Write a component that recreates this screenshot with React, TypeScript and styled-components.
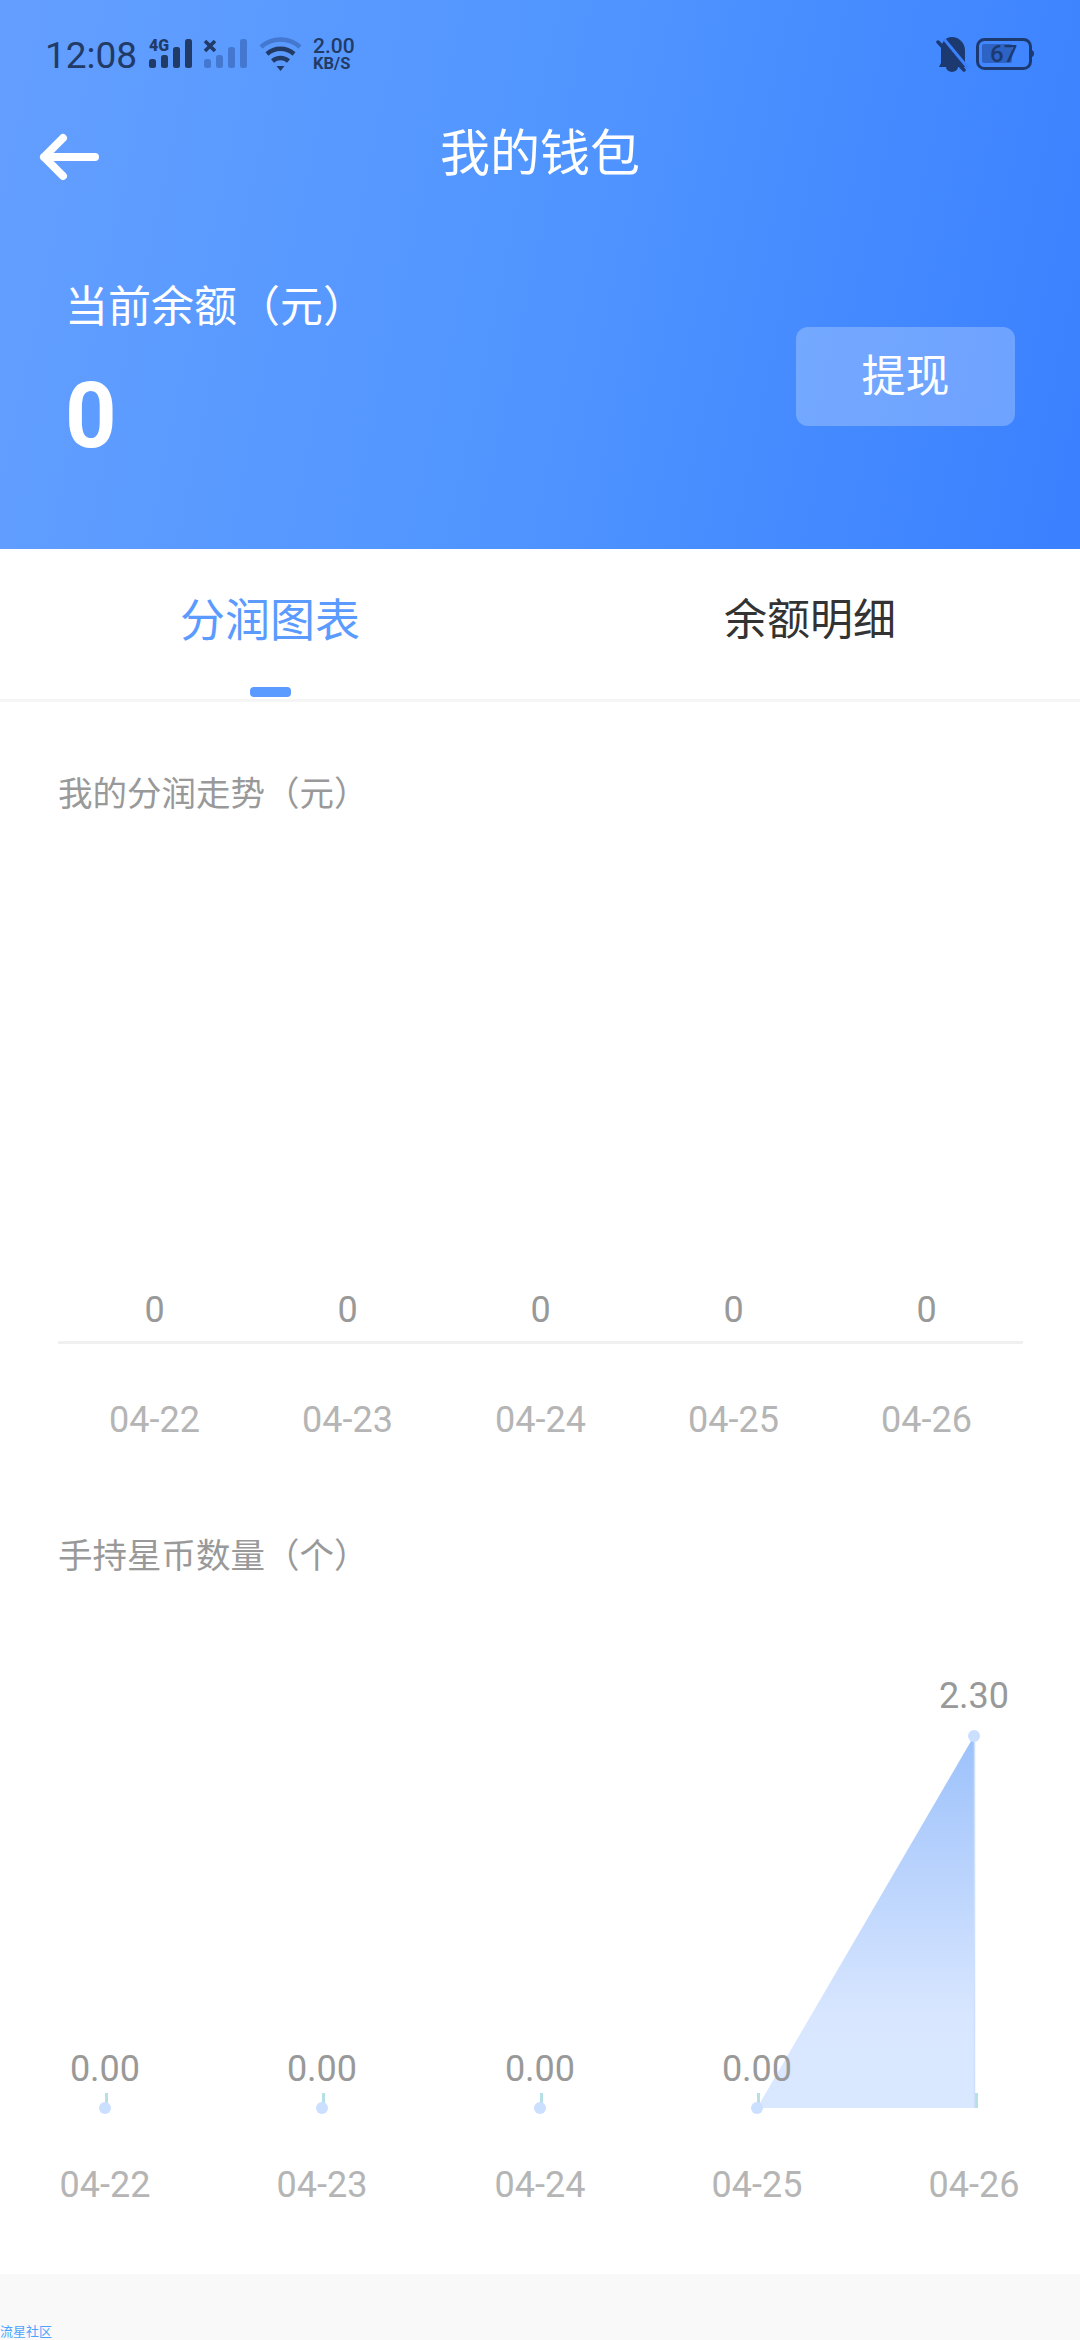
import React from "react";
import styled, { createGlobalStyle } from "styled-components";

const Global = createGlobalStyle`
  html, body { margin: 0; padding: 0; background: #fff; }
  body { font-family: Roboto, "Noto Sans CJK SC", sans-serif; }
  * { box-sizing: border-box; }
`;

const Page = styled.div`
  width: 1080px;
  height: 2340px;
  overflow: hidden;
  display: flex;
  flex-direction: column;
  background: #fff;
`;

const Header = styled.header`
  height: 549px;
  flex: none;
  background: linear-gradient(102deg, #649fff 0%, #5095ff 50%, #3a80ff 100%);
  display: flex;
  flex-direction: column;
`;

const StatusBar = styled.div`
  height: 110px;
  display: flex;
  align-items: center;
  padding: 0 44px 0 45px;
  color: #223a66;
`;

const Time = styled.span`
  font-size: 37px;
  width: 104px;
  flex: none;
`;

const StatusSpacer = styled.div`
  flex: 1;
`;

const TitleBar = styled.div`
  height: 84px;
  display: grid;
  grid-template-columns: 1fr auto 1fr;
  align-items: center;
  padding: 0;
`;

const BackButton = styled.div`
  padding: 8px 0 0 38px;
  display: flex;
`;

const Title = styled.h1`
  margin: 0;
  padding-top: 2px;
  color: #fff;
  font-size: 50px;
  font-weight: 400;
  line-height: 84px;
`;

const BalanceRow = styled.div`
  display: flex;
  justify-content: space-between;
  align-items: flex-start;
  padding: 88px 65px 0 65px;
`;

const BalanceInfo = styled.div`
  display: flex;
  flex-direction: column;
`;

const BalanceLabel = styled.div`
  color: #fff;
  font-size: 43px;
  line-height: 50px;
`;

const BalanceAmount = styled.div`
  margin-top: 40px;
  color: #fff;
  font-size: 90px;
  font-weight: 700;
  line-height: 90px;
`;

const WithdrawButton = styled.button`
  margin-top: 45px;
  width: 219px;
  height: 99px;
  border: 0;
  border-radius: 12px;
  background: rgba(255, 255, 255, 0.25);
  color: #fff;
  font-family: inherit;
  font-size: 44px;
  padding: 0 0 8px;
`;

const Tabs = styled.nav`
  height: 153px;
  flex: none;
  display: flex;
  border-bottom: 3px solid #f5f5f5;
`;

const Tab = styled.div<{ $active?: boolean }>`
  position: relative;
  flex: 1;
  text-align: center;
  line-height: ${(p) => (p.$active ? 145 : 142)}px;
  font-size: ${(p) => (p.$active ? 45 : 43)}px;
  color: ${(p) => (p.$active ? "#5b9bff" : "#333")};
`;

const TabMark = styled.span`
  position: absolute;
  left: 250px;
  bottom: 2px;
  width: 41px;
  height: 10px;
  border-radius: 4px;
  background: #5b9bff;
`;

const Main = styled.main`
  flex: 1;
  display: flex;
  flex-direction: column;
`;

const SectionTitle = styled.h2<{ $top: number }>`
  margin: ${(p) => p.$top}px 0 0;
  padding: 0 58px;
  color: #999;
  font-size: 34.5px;
  font-weight: 400;
  line-height: 48px;
`;

const BarChart = styled.section`
  margin: 470px 57px 0 58px;
  display: flex;
  flex-direction: column;
`;

const ChartRow = styled.div`
  display: grid;
  grid-template-columns: repeat(5, 1fr);
  text-align: center;
  font-size: 36px;
  line-height: 44px;
`;

const ValueCell = styled.span`
  color: #999;
`;

const DateCell = styled.span`
  color: #b5b5b5;
`;

const Axis = styled.div`
  margin: 9px 0 54px;
  height: 3px;
  background: #f0f0f0;
`;

const AreaChart = styled.svg`
  display: block;
  margin-top: 80px;
  flex: none;
`;

const Footer = styled.footer`
  height: 66px;
  flex: none;
  margin-top: 54px;
  background: #f9f9f9;
  display: flex;
  align-items: flex-end;
  color: #4da3ff;
  font-size: 13px;
  line-height: 16px;
`;

const DARK = "#223a66";
const DIM = "#4478d0";

const SignalBars = ({ color, x }: { color: string; x: number }) => (
  <g fill={color}>
    <rect x={x} y={59} width={7} height={9} rx={2.5} />
    <rect x={x + 12} y={55} width={7} height={13} rx={2.5} />
    <rect x={x + 24} y={47} width={7} height={21} rx={2.5} />
    <rect x={x + 36} y={39} width={7} height={29} rx={2.5} />
  </g>
);

const NetworkIcons = () => (
  <svg width={210} height={110} viewBox="149 0 210 110">
    <text x={149} y={51} fontSize={17} fontWeight={900} fill={DARK} fontFamily="Roboto" textLength={20} lengthAdjust="spacingAndGlyphs">
      4G
    </text>
    <SignalBars color={DARK} x={149} />
    <path d="M205 41l10 10M215 41l-10 10" stroke={DARK} strokeWidth={3.6} />
    <SignalBars color={DIM} x={204} />
    <path d="M261 47a29 29 0 0 1 39 0" fill="none" stroke={DIM} strokeWidth={4.5} />
    <path d="M267 54a20 20 0 0 1 27 0" fill="none" stroke={DARK} strokeWidth={4.5} />
    <path d="M272.500 61a12 12 0 0 1 16 0" fill="none" stroke={DARK} strokeWidth={4.5} />
    <path d="M276.500 66h8l-4 5z" fill={DARK} />
    <text x={313} y={53} fontSize={21} fontWeight={500} fill={DARK} fontFamily="Roboto">
      2.00
    </text>
    <text x={313} y={69} fontSize={16.500} fontWeight={700} fill={DARK} fontFamily="Roboto">
      KB/S
    </text>
  </svg>
);

const DeviceIcons = () => (
  <svg width={100} height={110} viewBox="936 0 100 110">
    <path
      d="M952 37c7 0 13 6 13 13v14l1 3h-27l2-4V50c0-7 4-13 11-13z"
      fill="#1c3a70"
    />
    <path d="M946 67h12a6 5 0 0 1-12 0z" fill="#1c3a70" />
    <path d="M941 41l24 29" stroke="#3a80ff" strokeWidth={3} transform="translate(3 -2)" />
    <path d="M938 42l26 28" stroke="#1c3a70" strokeWidth={3.5} strokeLinecap="round" />
    <rect x={982} y={44} width={30} height={19} rx={2} fill="#2d63c4" />
    <rect x={977.500} y={39.500} width={53} height={29} rx={7} fill="none" stroke="#1c3a70" strokeWidth={3} />
    <path d="M1032 50a4 4 0 0 1 0 7z" fill="#1c3a70" />
    <text x={990} y={62} fontSize={24} fontWeight={500} fill="#1c3a70" fontFamily="Roboto">
      67
    </text>
  </svg>
);

const BackArrow = () => (
  <svg width={64} height={50} viewBox="38 131 64 50">
    <path
      d="M44 156h51M63 137l-19 19 19 19"
      fill="none"
      stroke="#fff"
      strokeWidth={8}
      strokeLinecap="round"
      strokeLinejoin="round"
    />
  </svg>
);

const dates1 = ["04-22", "04-23", "04-24", "04-25", "04-26"];
const pts = [105, 322, 540, 757, 974];

const HoldingsChart = () => (
  <AreaChart width={1080} height={560} viewBox="0 1660 1080 560">
    <defs>
      <linearGradient id="area" x1="0" y1="0" x2="0" y2="1">
        <stop offset="0" stopColor="#9cc1fb" />
        <stop offset="0.75" stopColor="#d8e6ff" />
        <stop offset="1" stopColor="#d9e7ff" />
      </linearGradient>
    </defs>
    {pts.map((x, i) => (
      <rect key={x} x={x + (i === 4 ? 1 : 0)} y={2093} width={3} height={15} fill="#b5e0e6" />
    ))}
    <path d="M757 2108L974 1736V2108Z" fill="url(#area)" />
    <path d="M974.500 1740V2108" stroke="#cfe0ff" strokeWidth={1.500} />
    {pts.map((x, i) => (
      <circle key={x} cx={x} cy={i === 4 ? 1736 : 2108} r={6} fill="#cbdfff" />
    ))}
    <g fontSize={36} textAnchor="middle" fontFamily="Roboto" fill="#999">
      {pts.slice(0, 4).map((x) => (
        <text key={x} x={x} y={2081}>
          0.00
        </text>
      ))}
      <text x={974} y={1708}>
        2.30
      </text>
    </g>
    <g fontSize={36} textAnchor="middle" fontFamily="Roboto" fill="#b5b5b5">
      {pts.map((x, i) => (
        <text key={x} x={x} y={2197}>
          {dates1[i]}
        </text>
      ))}
    </g>
  </AreaChart>
);

export default function App() {
  return (
    <Page>
      <Global />
      <Header>
        <StatusBar>
          <Time>12:08</Time>
          <NetworkIcons />
          <StatusSpacer />
          <DeviceIcons />
        </StatusBar>
        <TitleBar>
          <BackButton>
            <BackArrow />
          </BackButton>
          <Title>我的钱包</Title>
          <span />
        </TitleBar>
        <BalanceRow>
          <BalanceInfo>
            <BalanceLabel>当前余额（元）</BalanceLabel>
            <BalanceAmount>0</BalanceAmount>
          </BalanceInfo>
          <WithdrawButton>提现</WithdrawButton>
        </BalanceRow>
      </Header>
      <Tabs>
        <Tab $active>
          分润图表
          <TabMark />
        </Tab>
        <Tab>余额明细</Tab>
      </Tabs>
      <Main>
        <SectionTitle $top={68}>我的分润走势（元）</SectionTitle>
        <BarChart>
          <ChartRow>
            {dates1.map((d) => (
              <ValueCell key={d}>0</ValueCell>
            ))}
          </ChartRow>
          <Axis />
          <ChartRow>
            {dates1.map((d) => (
              <DateCell key={d}>{d}</DateCell>
            ))}
          </ChartRow>
        </BarChart>
        <SectionTitle $top={90}>手持星币数量（个）</SectionTitle>
        <HoldingsChart />
        <Footer>流星社区</Footer>
      </Main>
    </Page>
  );
}
